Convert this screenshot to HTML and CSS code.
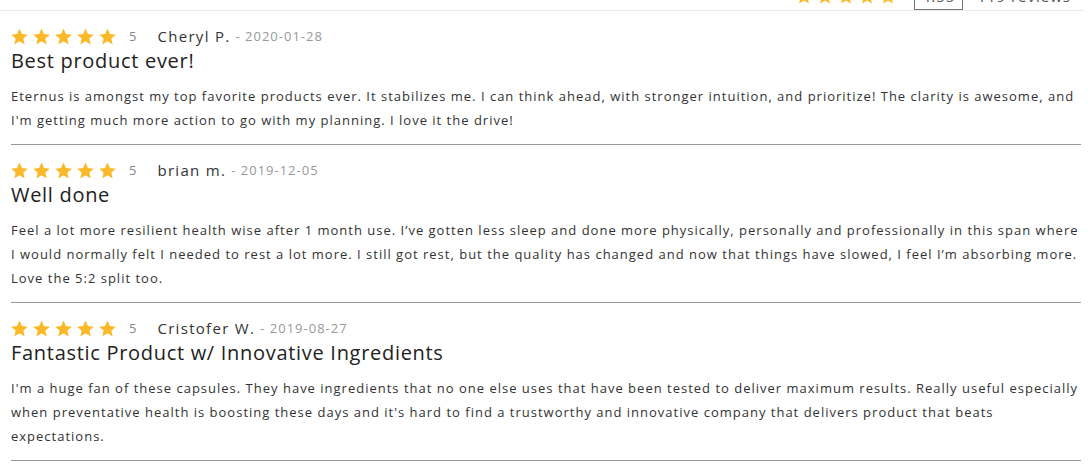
FILE: index.html
```html
<!doctype html>
<html lang="en">
  <head>
    <meta charset="UTF-8" />
    <title>Reviews</title>
    <link rel="stylesheet" href="styles.css">
  </head>
  <body>
    <svg width="0" height="0" style="position:absolute">
      <defs>
        <symbol id="star" viewBox="1 1.2 22 21">
          <path d="M12 1.5l3.1 7.1 7.7.7-5.8 5.1 1.7 7.6L12 18l-6.7 4 1.7-7.6-5.8-5.1 7.7-.7z" />
        </symbol>
      </defs>
    </svg>

    <div class="summary">
      <div class="stars big">
        <svg><use href="#star" /></svg>
        <svg><use href="#star" /></svg>
        <svg><use href="#star" /></svg>
        <svg><use href="#star" /></svg>
        <svg><use href="#star" /></svg>
      </div>
      <span class="avg">4.55</span>
      <span class="count">119 reviews</span>
    </div>

    <div class="reviews">
      <div class="review">
        <div class="meta">
          <div class="stars">
            <svg><use href="#star" /></svg>
            <svg><use href="#star" /></svg>
            <svg><use href="#star" /></svg>
            <svg><use href="#star" /></svg>
            <svg><use href="#star" /></svg>
          </div>
          <span class="score">5</span>
          <span class="author">Cheryl P.</span>
          <span class="date">- 2020-01-28</span>
        </div>
        <h3>Best product ever!</h3>
        <p>Eternus is amongst my top favorite products ever. It stabilizes me. I can think ahead, with stronger intuition, and prioritize! The clarity is awesome, and I'm getting much more action to go with my planning. I love it the drive!</p>
      </div>

      <div class="review">
        <div class="meta">
          <div class="stars">
            <svg><use href="#star" /></svg>
            <svg><use href="#star" /></svg>
            <svg><use href="#star" /></svg>
            <svg><use href="#star" /></svg>
            <svg><use href="#star" /></svg>
          </div>
          <span class="score">5</span>
          <span class="author">brian m.</span>
          <span class="date">- 2019-12-05</span>
        </div>
        <h3>Well done</h3>
        <p>Feel a lot more resilient health wise after 1 month use. I’ve gotten less sleep and done more physically, personally and professionally in this span where I would normally felt I needed to rest a lot more. I still got rest, but the quality has changed and now that things have slowed, I feel I’m absorbing more. Love the 5:2 split too.</p>
      </div>

      <div class="review">
        <div class="meta">
          <div class="stars">
            <svg><use href="#star" /></svg>
            <svg><use href="#star" /></svg>
            <svg><use href="#star" /></svg>
            <svg><use href="#star" /></svg>
            <svg><use href="#star" /></svg>
          </div>
          <span class="score">5</span>
          <span class="author">Cristofer W.</span>
          <span class="date">- 2019-08-27</span>
        </div>
        <h3>Fantastic Product w/ Innovative Ingredients</h3>
        <p>I'm a huge fan of these capsules. They have ingredients that no one else uses that have been tested to deliver maximum results. Really useful especially when preventative health is boosting these days and it's hard to find a trustworthy and innovative company that delivers product that beats expectations.</p>
      </div>
    </div>
  </body>
</html>
```

FILE: styles.css
```css
body {
  font-family: "Open Sans", Arial, sans-serif;
  margin: 0;
  padding: 0 11px;
  background: #fff;
  color: #333;
}
.summary {
  display: flex;
  align-items: center;
  justify-content: flex-end;
  height: 28px;
  margin: -18px -4px 0 -11px;
  padding-right: 14px;
  border-bottom: 1px solid #ebebeb;
  font-size: 15px;
  letter-spacing: 1px;
  color: #555;
}
.summary .stars {
  margin-right: 18px;
}
.summary .stars svg {
  width: 16px;
  height: 16px;
}
.avg {
  border: 1px solid #777;
  padding: 2px 7px;
  line-height: 22px;
  margin-right: 14px;
}
.stars {
  display: flex;
  gap: 5px;
}
.stars svg {
  width: 17px;
  height: 17px;
  fill: #fbb829;
}
.reviews {
  width: 1070px;
}
.review {
  padding: 15px 0 12px;
  border-bottom: 1px solid #999;
}
.meta {
  display: flex;
  align-items: center;
  height: 20px;
}
.score {
  font-size: 13px;
  color: #888;
  margin-left: 13px;
  margin-right: 21px;
}
.author {
  font-size: 15px;
  letter-spacing: 1.3px;
  color: #333;
  margin-right: 5px;
}
.date {
  font-size: 13px;
  letter-spacing: 1px;
  color: #999;
}
h3 {
  margin: 2px 0 0;
  font-size: 20px;
  font-weight: 400;
  letter-spacing: 0.7px;
  line-height: 26px;
  color: #222;
}
p {
  margin: 10px 0 0;
  font-size: 13px;
  line-height: 24px;
  letter-spacing: 1px;
  color: #333;
}
```
